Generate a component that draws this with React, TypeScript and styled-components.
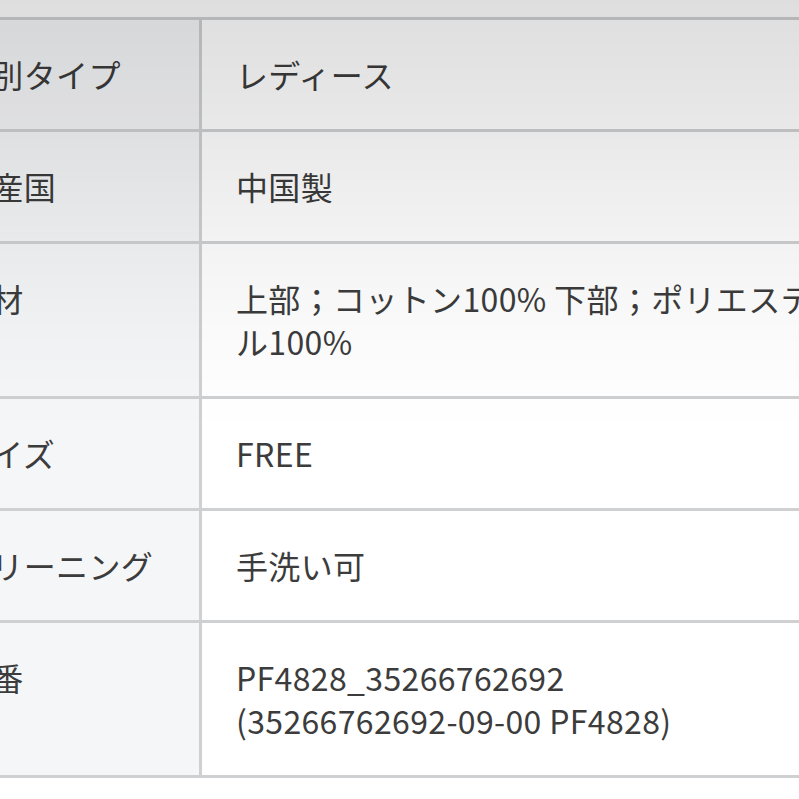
import React from "react";
import styled, { createGlobalStyle } from "styled-components";

const GlobalStyle = createGlobalStyle`
  html, body {
    margin: 0;
    padding: 0;
    background: #ffffff;
    overflow: hidden;
    width: 799px;
    height: 799px;
  }
  body {
    font-family: "Noto Sans CJK JP", "Noto Sans", sans-serif;
    color: #3c3c3c;
  }
  body::after {
    content: "";
    position: fixed;
    inset: 0;
    pointer-events: none;
    background: linear-gradient(
      to bottom,
      rgba(0, 0, 0, 0.13) 0px,
      rgba(0, 0, 0, 0.095) 110px,
      rgba(0, 0, 0, 0.055) 220px,
      rgba(0, 0, 0, 0.02) 330px,
      rgba(0, 0, 0, 0) 430px
    );
  }
`;

const Page = styled.main`
  padding-top: 17px;
  width: 799px;
  height: 799px;
  overflow: hidden;
`;

const SpecTable = styled.table`
  border-collapse: collapse;
  margin-left: -78px;
  width: 948px;
  table-layout: fixed;
`;

const Row = styled.tr`
  vertical-align: baseline;
`;

const Label = styled.th`
  width: 277px;
  box-sizing: border-box;
  text-align: left;
  font-weight: 400;
  font-size: 32px;
  line-height: 43px;
  letter-spacing: 0.35px;
  padding: 33px 34px;
  background: #f5f6f8;
  border: 3px solid #cfd0d2;
  white-space: nowrap;
  overflow: hidden;
`;

const Value = styled.td`
  text-align: left;
  font-size: 32px;
  line-height: 43px;
  letter-spacing: 0.35px;
  padding: 33px 34px;
  background: #ffffff;
  border: 3px solid #cfd0d2;
`;

const rows: [string, string[]][] = [
  ["性別タイプ", ["レディース"]],
  ["原産国", ["中国製"]],
  ["素材", ["上部；コットン100% 下部；ポリエステル100%"]],
  ["サイズ", ["FREE"]],
  ["クリーニング", ["手洗い可"]],
  ["品番", ["PF4828_35266762692", "(35266762692-09-00 PF4828)"]],
];

export default function App() {
  return (
    <>
      <GlobalStyle />
      <Page>
        <SpecTable>
          <tbody>
            {rows.map(([label, lines]) => (
              <Row key={label}>
                <Label>{label}</Label>
                <Value>
                  {lines.map((l, i) => (
                    <React.Fragment key={i}>
                      {i > 0 && <br />}
                      {l}
                    </React.Fragment>
                  ))}
                </Value>
              </Row>
            ))}
          </tbody>
        </SpecTable>
      </Page>
    </>
  );
}
